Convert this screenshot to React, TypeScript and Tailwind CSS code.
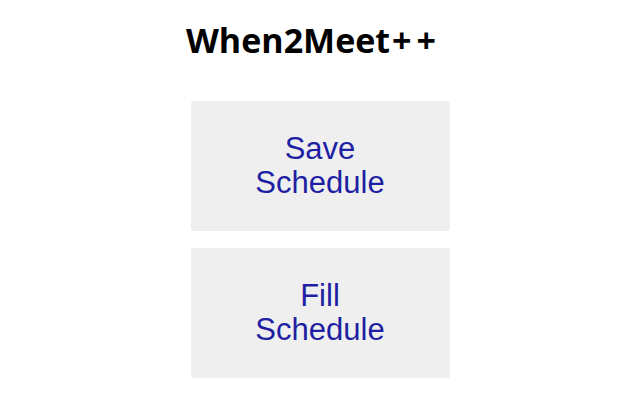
export default function App() {
  return (
    <div className="min-h-screen w-full bg-white flex flex-col items-center pt-[22px]">
      <h1 className="mr-[18px] text-[34px] leading-[36px] font-bold text-black font-['Open_Sans',sans-serif]">
        When2Meet<span className="ml-[2px] tracking-[5px]">+</span>+
      </h1>

      <div className="mt-[43px] flex flex-col gap-[17px]">
        <button className="w-[259px] h-[130px] rounded-[3px] bg-[#efefef] flex items-center justify-center">
          <span className="w-[150px] text-center text-[31px] leading-[34px] text-[#1f1fa3] font-['Liberation_Sans',Arial,sans-serif]">
            Save Schedule
          </span>
        </button>
        <button className="w-[259px] h-[130px] rounded-[3px] bg-[#efefef] flex items-center justify-center">
          <span className="w-[150px] text-center text-[31px] leading-[34px] text-[#1f1fa3] font-['Liberation_Sans',Arial,sans-serif]">
            Fill Schedule
          </span>
        </button>
      </div>
    </div>
  );
}
